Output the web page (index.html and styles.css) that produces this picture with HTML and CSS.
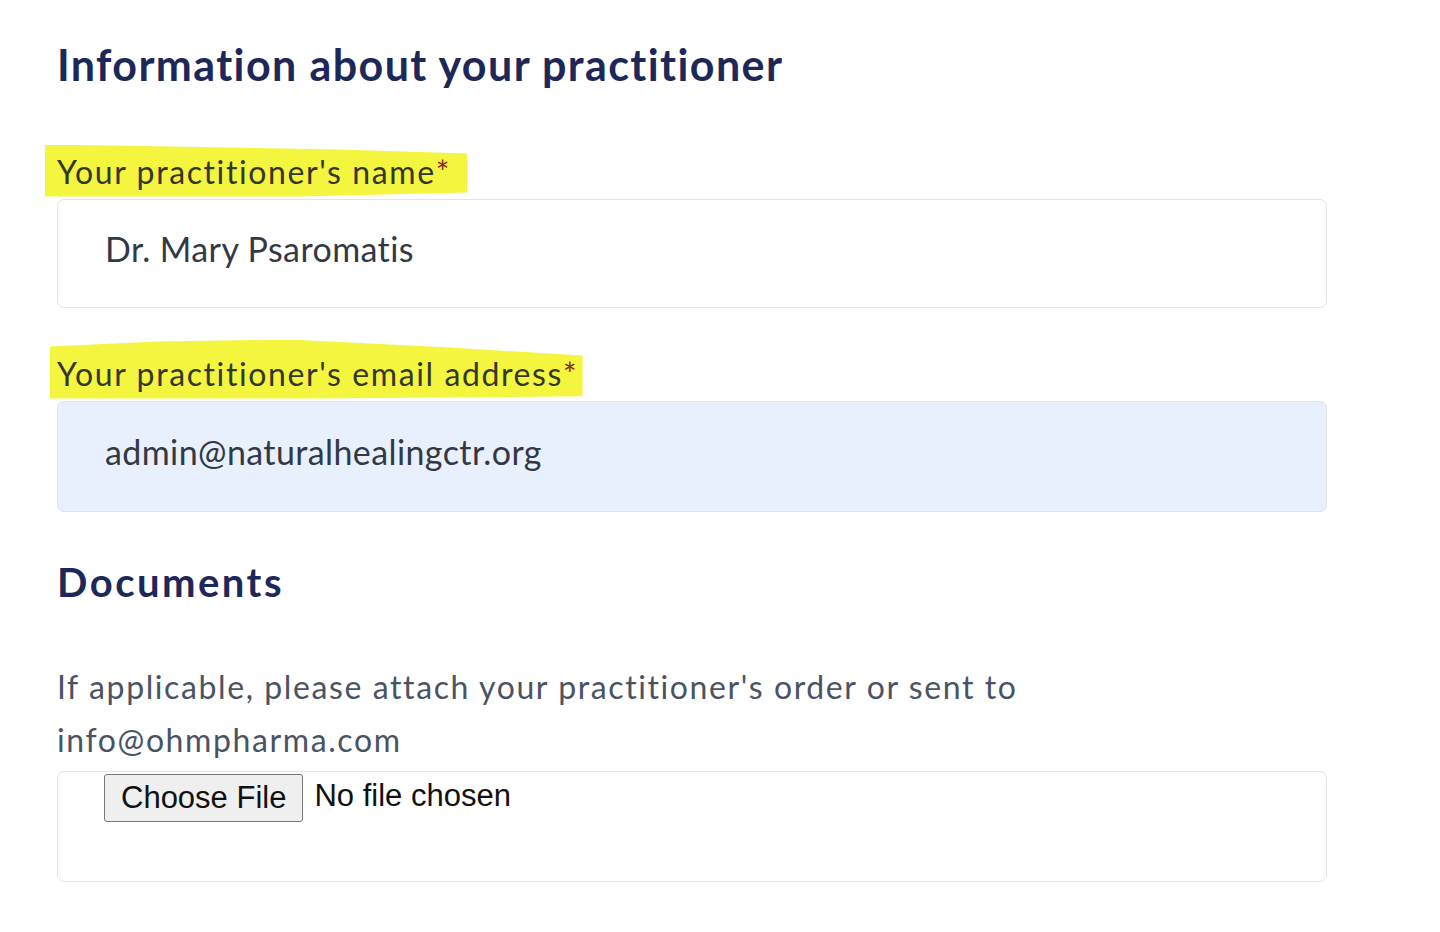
FILE: index.html
```html
<!DOCTYPE html>
<html lang="en">
<head>
<meta charset="utf-8">
<title>Practitioner information</title>
<link rel="stylesheet" href="styles.css">
</head>
<body>
<main class="form">
  <h1 class="title">Information about your practitioner</h1>

  <div class="field field-first">
    <label class="label"><span class="hl hl-1">Your practitioner's name<span class="req">*</span></span></label>
    <div class="input input-plain">Dr. Mary Psaromatis</div>
  </div>

  <div class="field field-second">
    <label class="label"><span class="hl hl-2">Your practitioner's email address<span class="req">*</span></span></label>
    <div class="input input-filled">admin@naturalhealingctr.org</div>
  </div>

  <h2 class="subtitle">Documents</h2>
  <p class="note">If applicable, please attach your practitioner's order or sent to<br>info@ohmpharma.com</p>
  <div class="file-box">
    <button class="file-btn" type="button">Choose File</button>
    <span class="file-status">No file chosen</span>
  </div>
</main>
</body>
</html>
```

FILE: styles.css
```css
* { box-sizing: border-box; }
html, body { margin: 0; padding: 0; background: #ffffff; }
body {
  font-family: Lato, "Noto Sans", sans-serif;
  font-variant-ligatures: none;
}

.form {
  padding: 39px 0 0 57px;
  width: 1327px;
}

.title {
  margin: 0;
  font-size: 43px;
  line-height: 1.2;
  font-weight: 700;
  letter-spacing: 1.4px;
  color: #1d2858;
}

.field-first { margin-top: 54px; }
.field-second { margin-top: 32px; }

.label {
  display: block;
  font-size: 32px;
  line-height: 35px;
  letter-spacing: 1.6px;
  color: #35372c;
}

.hl {
  display: inline-block;
  background: #f3f53e;
}
.hl-1 {
  padding: 9px 18px 8px 12px;
  margin-left: -12px;
  clip-path: polygon(0 0, 30% 2px, 70% 5px, 100% 9px, 100% 92%, 60% 100%, 0 100%);
}
.hl-2 {
  padding: 16px 6px 8px 7px;
  margin-left: -7px;
  clip-path: polygon(0 7px, 20% 2px, 45% 0, 75% 8px, 100% 16px, 100% 96%, 50% 100%, 0 100%);
}

.req { color: #8a2a1a; letter-spacing: 0; }

.input {
  margin-top: 2px;
  border: 1px solid #e3e3e3;
  border-radius: 7px;
  padding: 0 0 9px 47px;
  display: flex;
  align-items: center;
  font-size: 34px;
  letter-spacing: 0.4px;
  color: #333944;
}
.input-plain { height: 109px; }
.input-filled { background: #e8f0fe; height: 111px; }

.subtitle {
  margin: 46px 0 0;
  font-size: 40px;
  line-height: 1.2;
  font-weight: 700;
  letter-spacing: 2.5px;
  color: #1d2858;
}

.note {
  margin: 54px 0 0;
  font-size: 32px;
  line-height: 53px;
  letter-spacing: 1.6px;
  color: #4a5364;
}

.file-box {
  margin-top: 5px;
  height: 111px;
  border: 1px solid #e3e3e3;
  border-radius: 7px;
  padding: 2px 0 0 46px;
  display: flex;
  align-items: flex-start;
  gap: 11px;
  font-family: "Liberation Sans", Arial, sans-serif;
}

.file-btn {
  font-family: "Liberation Sans", Arial, sans-serif;
  font-size: 31px;
  height: 48px;
  padding: 0 16px;
  background: #efefef;
  border: 1px solid #767676;
  border-radius: 3px;
  color: #111111;
}

.file-status {
  font-size: 31px;
  line-height: 44px;
  color: #111111;
}
```
